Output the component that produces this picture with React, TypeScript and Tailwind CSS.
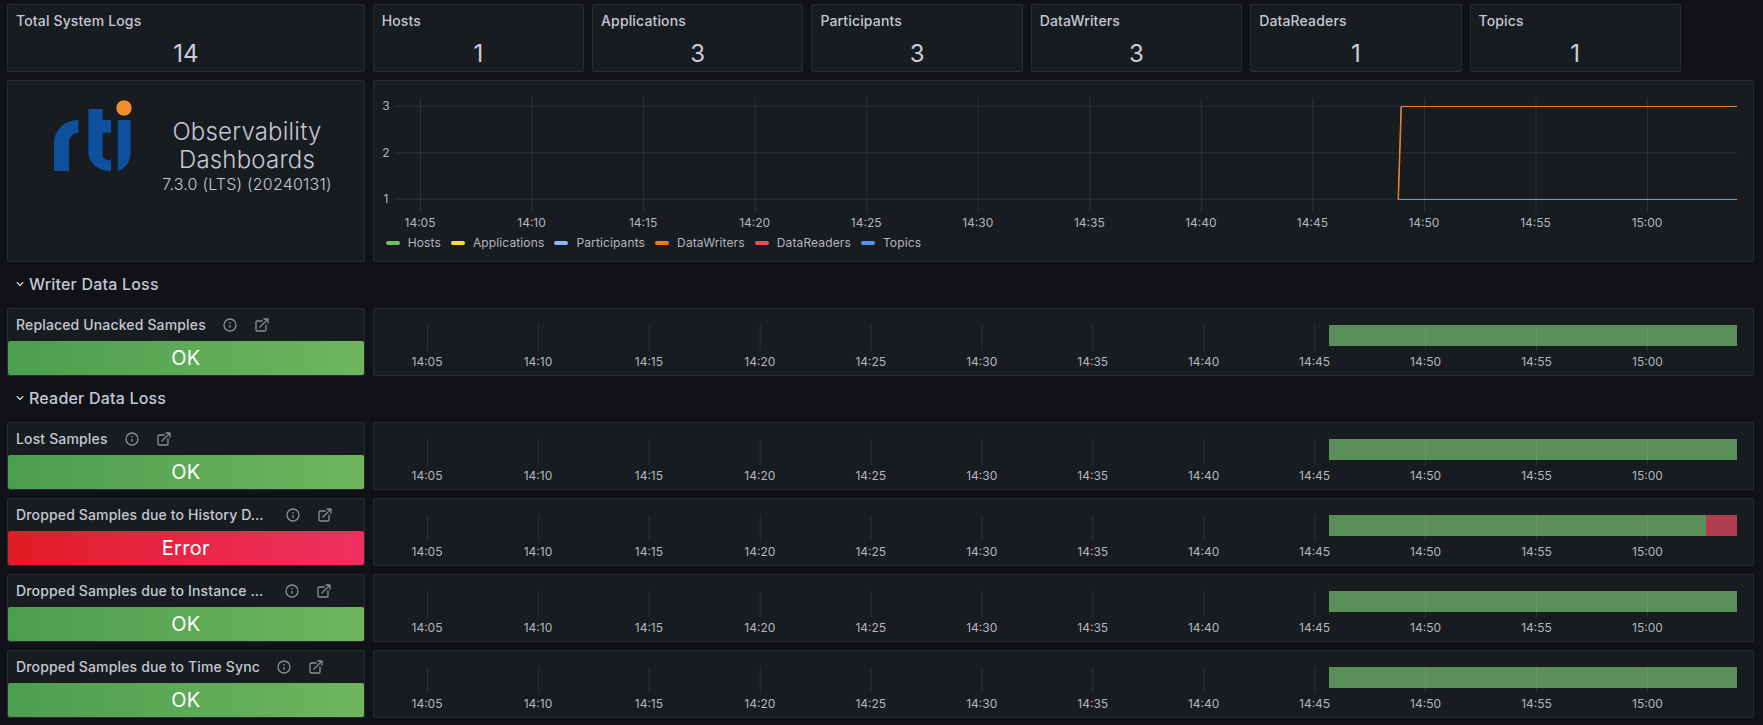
import { FunctionComponent } from "react";

const font = { fontFamily: "Inter, 'Liberation Sans', sans-serif" };

const stats = [
  { title: "Hosts", value: "1" },
  { title: "Applications", value: "3" },
  { title: "Participants", value: "3" },
  { title: "DataWriters", value: "3" },
  { title: "DataReaders", value: "1" },
  { title: "Topics", value: "1" },
];

const legend = [
  { name: "Hosts", swatch: "bg-[#73bf69]" },
  { name: "Applications", swatch: "bg-[#fade2a]" },
  { name: "Participants", swatch: "bg-[#8ab8ff]" },
  { name: "DataWriters", swatch: "bg-[#ff780a]" },
  { name: "DataReaders", swatch: "bg-[#f2495c]" },
  { name: "Topics", swatch: "bg-[#5794f2]" },
];

const times = [
  "14:05", "14:10", "14:15", "14:20", "14:25", "14:30",
  "14:35", "14:40", "14:45", "14:50", "14:55", "15:00",
];

const InfoIcon = () => (
  <svg viewBox="0 0 24 24" className="h-4 w-4 fill-[#8c8d96]">
    <path d="M12,2A10,10,0,1,0,22,12,10,10,0,0,0,12,2Zm0,18a8,8,0,1,1,8-8A8,8,0,0,1,12,20Zm0-8.5a1,1,0,0,0-1,1v3a1,1,0,0,0,2,0v-3A1,1,0,0,0,12,11.5Zm0-4a1.25,1.25,0,1,0,1.25,1.25A1.25,1.25,0,0,0,12,7.5Z" />
  </svg>
);

const LinkIcon = () => (
  <svg viewBox="0 0 24 24" className="h-4 w-4 fill-[#8c8d96]">
    <path d="M18,10.82a1,1,0,0,0-1,1V19a1,1,0,0,1-1,1H5a1,1,0,0,1-1-1V8A1,1,0,0,1,5,7h7.18a1,1,0,0,0,0-2H5A3,3,0,0,0,2,8V19a3,3,0,0,0,3,3H16a3,3,0,0,0,3-3V11.82A1,1,0,0,0,18,10.82Zm3.92-8.2a1,1,0,0,0-.54-.54A1,1,0,0,0,21,2H15a1,1,0,0,0,0,2h3.59L8.29,14.29a1,1,0,0,0,0,1.42,1,1,0,0,0,1.42,0L20,5.41V9a1,1,0,0,0,2,0V3A1,1,0,0,0,21.92,2.62Z" />
  </svg>
);

const Chevron = () => (
  <svg viewBox="0 0 24 24" className="h-4 w-4 fill-[#ccccdc]">
    <path d="M17,9.17a1,1,0,0,0-1.41,0L12,12.71,8.46,9.17a1,1,0,0,0-1.41,0,1,1,0,0,0,0,1.42l4.24,4.24a1,1,0,0,0,1.42,0L17,10.59A1,1,0,0,0,17,9.17Z" />
  </svg>
);

const Panel: FunctionComponent<{ className?: string; children: React.ReactNode }> = ({ className, children }) => (
  <div className={`rounded-[2px] border border-[#2a2c31] bg-[#181b1f] ${className ?? ""}`}>{children}</div>
);

const StatPanel: FunctionComponent<{ title: string; value: string; span: string }> = ({ title, value, span }) => (
  <Panel className={`${span} flex h-[68px] flex-col`}>
    <div className="flex h-[32px] items-center pl-2 text-sm font-medium tracking-[0.15px] text-[#c6c7d4]">{title}</div>
    <div className="flex flex-1 items-center justify-center text-2xl text-[#ccccdc]">{value}</div>
  </Panel>
);

const StatusPanel: FunctionComponent<{ title: string; error?: boolean; cut?: boolean }> = ({ title, error, cut }) => (
  <Panel className="col-span-5 flex h-[68px] flex-col">
    <div className="flex h-[32px] items-center pl-2 text-sm font-medium tracking-[0.15px] text-[#c6c7d4]">
      <span className="whitespace-nowrap">{title}</span>
      <span className={`flex gap-4 ${cut ? "ml-[21px]" : "ml-[16px]"}`}>
        <InfoIcon />
        <LinkIcon />
      </span>
    </div>
    <div
      className={`flex flex-1 items-center justify-center rounded-[2px] text-xl tracking-[0.3px] text-white ${
        error
          ? "bg-gradient-to-r from-[#e01b24] to-[#f0305f]"
          : "bg-gradient-to-r from-[#4b9e50] to-[#6fb65f]"
      }`}
    >
      {error ? "Error" : "OK"}
    </div>
  </Panel>
);

const TimelinePanel: FunctionComponent<{ error?: boolean }> = ({ error }) => (
  <Panel className="col-span-19 h-[68px] overflow-hidden">
    <svg width="1378" height="66" className="block">
      <rect x="955" y="16" width="408" height="21" fill="#5a8f59" />
      {error && <rect x="1332" y="16" width="31" height="21" fill="#b03e50" />}
      {times.map((t, i) => (
        <g key={t}>
          <line
            x1={53.5 + i * 110.9}
            x2={53.5 + i * 110.9}
            y1="16"
            y2="42"
            stroke="#ccccdc"
            strokeOpacity="0.12"
          />
          <text x={53 + i * 110.95} y="56.5" textAnchor="middle" className="fill-[#b5b6bd] text-xs">
            {t}
          </text>
        </g>
      ))}
    </svg>
  </Panel>
);

const OverviewChart = () => (
  <Panel className="col-span-19 h-[182px]">
    <svg width="1378" height="151" className="block">
      {[
        { y: 25, label: "3" },
        { y: 72, label: "2" },
        { y: 118, label: "1" },
      ].map((g) => (
        <g key={g.label}>
          <line x1="21" x2="1363" y1={g.y} y2={g.y} stroke="#ccccdc" strokeOpacity="0.12" />
          <text x="12" y={g.y + 4} textAnchor="middle" className="fill-[#b5b6bd] text-xs">
            {g.label}
          </text>
        </g>
      ))}
      {times.map((t, i) => (
        <g key={t}>
          <line
            x1={46.5 + i * 111.55}
            x2={46.5 + i * 111.55}
            y1="17"
            y2="132"
            stroke="#ccccdc"
            strokeOpacity="0.12"
          />
          <text x={46 + i * 111.55} y="145.5" textAnchor="middle" className="fill-[#b5b6bd] text-xs">
            {t}
          </text>
        </g>
      ))}
      <line x1="1024" x2="1027" y1="118.5" y2="25.5" stroke="#b9a06e" strokeWidth="1" />
      <polyline points="1024.5,118.5 1027.5,25.5 1363,25.5" fill="none" stroke="#ff7a2c" strokeWidth="1" />
      <line x1="1024.5" x2="1363" y1="118.5" y2="118.5" stroke="#6d9ddb" strokeWidth="1" />
    </svg>
    <div className="flex h-[22px] items-center gap-[10px] pl-[12px] text-xs tracking-[0.13px] text-[#b5b6bd]">
      {legend.map((l) => (
        <div key={l.name} className="flex items-center gap-2">
          <span className={`h-[4px] w-[14px] rounded-full ${l.swatch}`} />
          {l.name}
        </div>
      ))}
    </div>
  </Panel>
);

const RtiLogo = () => (
  <svg viewBox="0 0 360 300" className="mt-[4px] ml-[22px] h-[100px] w-[120px] shrink-0">
    <path
      d="M72 258V175C72 135 105 105 145 105V143C128 143 117 157 117 175V258Z"
      fill="#0e4f9e"
    />
    <path
      d="M175 72H218V105H243V143H218V212C218 222 228 226 243 226V258C205 258 175 235 175 200Z"
      fill="#0e4f9e"
    />
    <path d="M263 105H302V200C302 232 285 252 263 258Z" fill="#0e4f9e" />
    <circle cx="282" cy="69" r="23" fill="#ef8f2b" />
  </svg>
);

const SectionRow: FunctionComponent<{ title: string }> = ({ title }) => (
  <div className="col-span-24 flex h-[30px] items-center gap-[1px] pb-[2px] pl-[5px] text-base font-medium tracking-[0.2px] text-[#c6c7d4]">
    <Chevron />
    {title}
  </div>
);

const App: FunctionComponent = () => {
  return (
    <div style={font} className="min-h-[725px] bg-[#111217] pt-1 pr-[9px] pl-[7px]">
      <div className="grid grid-cols-24 gap-2">
        <StatPanel title="Total System Logs" value="14" span="col-span-5" />
        {stats.map((s) => (
          <StatPanel key={s.title} title={s.title} value={s.value} span="col-span-3" />
        ))}
        <div className="col-span-1" />

        <Panel className="col-span-5 flex h-[182px] items-start">
          <RtiLogo />
          <div className="mt-[37px] w-[194px] text-center text-[#c6c7d4]">
            <div className="text-2xl font-light tracking-[0.2px] leading-[28px]">Observability</div>
            <div className="text-2xl font-light tracking-[0.2px] leading-[28px]">Dashboards</div>
            <div className="text-base font-light tracking-[0.2px] leading-[21px]">7.3.0 (LTS) (20240131)</div>
          </div>
        </Panel>
        <OverviewChart />

        <SectionRow title="Writer Data Loss" />
        <StatusPanel title="Replaced Unacked Samples" />
        <TimelinePanel />

        <SectionRow title="Reader Data Loss" />
        <StatusPanel title="Lost Samples" />
        <TimelinePanel />
        <StatusPanel title="Dropped Samples due to History D…" error cut />
        <TimelinePanel error />
        <StatusPanel title="Dropped Samples due to Instance …" cut />
        <TimelinePanel />
        <StatusPanel title="Dropped Samples due to Time Sync" />
        <TimelinePanel />
      </div>
    </div>
  );
};

export default App;
